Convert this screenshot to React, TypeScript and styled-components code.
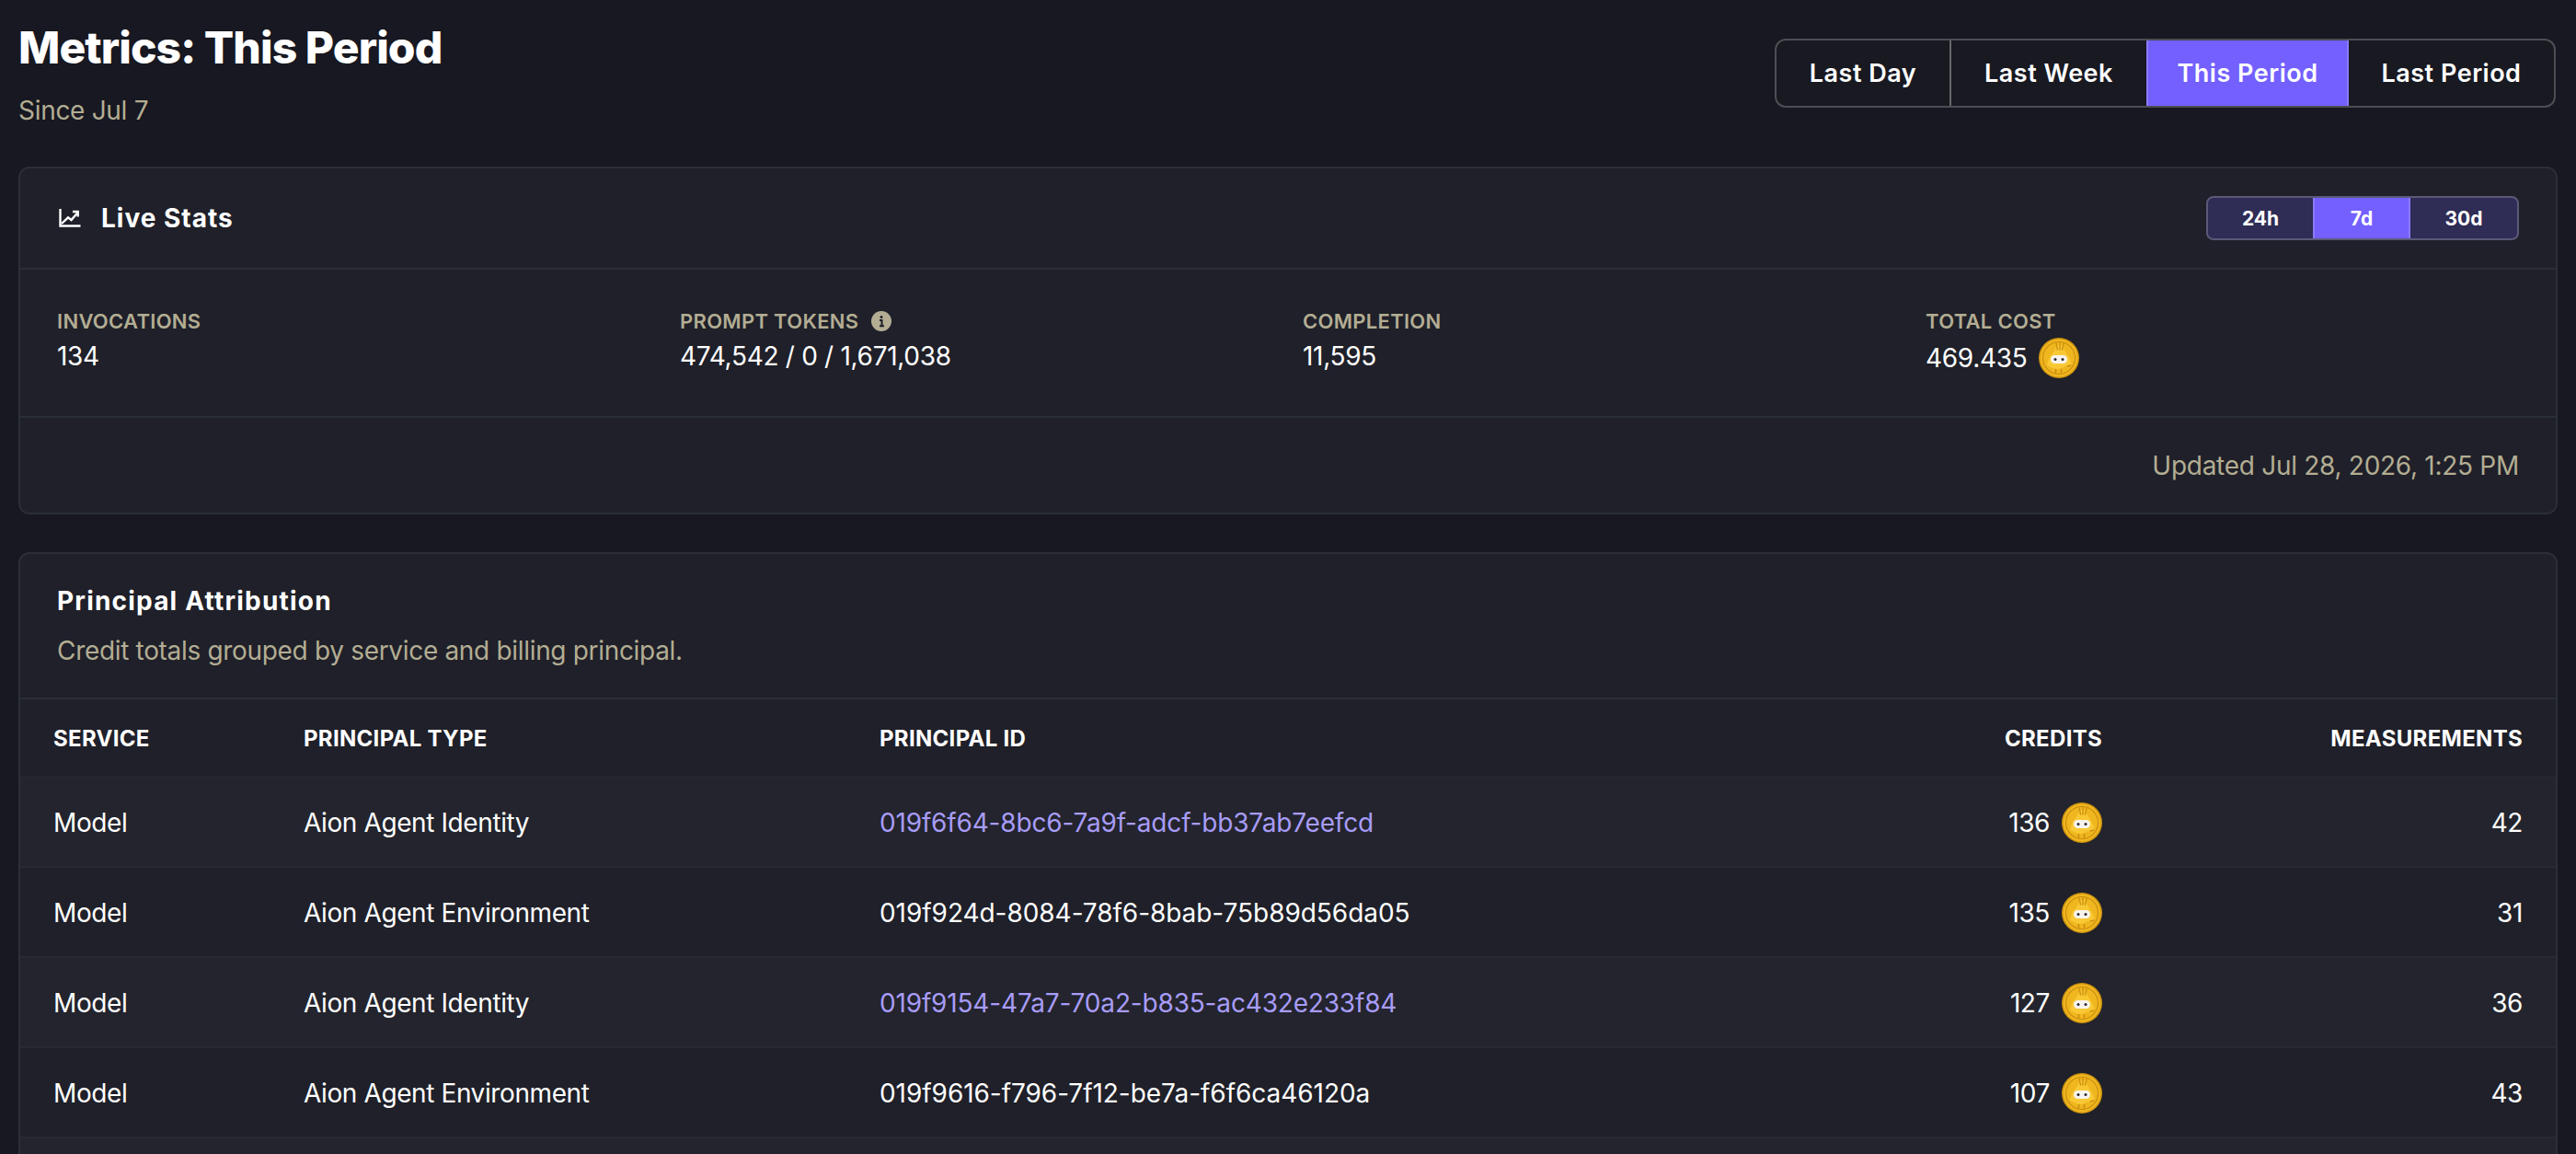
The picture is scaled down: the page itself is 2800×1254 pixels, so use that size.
import React from "react";
import styled, { createGlobalStyle } from "styled-components";

const Global = createGlobalStyle`
  * { box-sizing: border-box; }
  html, body { margin: 0; height: 1254px; overflow: hidden; background: #171821; }
  body { font-family: Inter, "Liberation Sans", sans-serif; color: #fff; }
`;

const MUTED = "#b3ad93";

const Page = styled.div`
  width: 2800px;
  height: 1254px;
  overflow: hidden;
  padding: 0 20px;
  background: #171821;
`;
const TopBar = styled.header`
  display: flex;
  justify-content: space-between;
  align-items: flex-start;
  height: 181px;
  padding-top: 22px;
`;
const Title = styled.h1`
  margin: 0;
  font-size: 48px;
  line-height: 60px;
  font-weight: 800;
  letter-spacing: -0.9px;
`;
const Since = styled.p`
  margin: 18px 0 0;
  font-size: 28px;
  line-height: 40px;
  letter-spacing: -0.3px;
  color: ${MUTED};
`;
const Segments = styled.div`
  display: flex;
  margin: 20px 2px 0 0;
  height: 75px;
  border: 2px solid #4d4d54;
  border-radius: 12px;
  overflow: hidden;
  background: #181921;
`;
const Segment = styled.button<{ $w: number; $active?: boolean; $divider?: boolean }>`
  width: ${(p) => p.$w}px;
  margin: ${(p) => (p.$active ? "-2px 0" : "0")};
  border: ${(p) => (p.$active ? "2px solid #8a7bff" : "none")};
  border-right: ${(p) => (p.$active ? "2px solid #8a7bff" : p.$divider ? "2px solid #68686e" : "none")};
  background: ${(p) => (p.$active ? "#7360ff" : "transparent")};
  color: #fff;
  font-family: Inter, sans-serif;
  font-size: 27px;
  font-weight: 600;
  letter-spacing: 0.5px;
  padding: 0;
`;
const Card = styled.section`
  background: #1f2029;
  border: 2px solid #2a2e37;
  border-radius: 12px;
  overflow: hidden;
`;
const LiveCard = styled(Card)`
  height: 378px;
`;
const TableCard = styled(Card)`
  margin-top: 41px;
  height: 700px;
`;
const CardHead = styled.div`
  display: flex;
  justify-content: space-between;
  align-items: center;
  height: 110px;
  padding: 0 40px 0 42px;
  border-bottom: 2px solid #2a2e37;
`;
const HeadTitle = styled.h2`
  display: flex;
  align-items: center;
  gap: 22px;
  margin: 0;
  font-size: 28px;
  line-height: 40px;
  font-weight: 700;
  letter-spacing: 1px;
`;
const Ranges = styled.div`
  display: flex;
  height: 48px;
  border: 2px solid #5b5978;
  border-radius: 8px;
  overflow: hidden;
  background: #2f2c55;
`;
const Range = styled.button<{ $w: number; $active?: boolean }>`
  width: ${(p) => p.$w}px;
  margin: ${(p) => (p.$active ? "-2px 0" : "0")};
  border: ${(p) => (p.$active ? "2px solid #8a7bff" : "none")};
  background: ${(p) => (p.$active ? "#7360ff" : "transparent")};
  color: #fff;
  font-family: Inter, sans-serif;
  font-size: 21px;
  font-weight: 700;
  padding: 0;
`;
const Stats = styled.div`
  display: grid;
  grid-template-columns: repeat(4, 1fr);
  column-gap: 32px;
  height: 161px;
  padding: 40px 40px 0 40px;
  border-bottom: 2px solid #2a2e37;
`;
const Label = styled.div`
  display: flex;
  align-items: center;
  gap: 14px;
  height: 32px;
  font-size: 22px;
  font-weight: 600;
  letter-spacing: 0.3px;
  color: ${MUTED};
`;
const Value = styled.div`
  display: flex;
  align-items: center;
  gap: 13px;
  margin-top: 2px;
  min-height: 40px;
  font-size: 28px;
  line-height: 40px;
  letter-spacing: -0.3px;
`;
const Updated = styled.div`
  display: flex;
  justify-content: flex-end;
  align-items: center;
  height: 101px;
  padding: 2px 40px 0;
  font-size: 28px;
  letter-spacing: -0.28px;
  color: ${MUTED};
`;
const TableHead = styled.div`
  height: 158px;
  padding: 31px 40px 0;
  border-bottom: 2px solid #2a2e37;
`;
const TableTitle = styled.h2`
  margin: 0;
  font-size: 28px;
  line-height: 40px;
  font-weight: 700;
  letter-spacing: 1.2px;
`;
const TableSub = styled.p`
  margin: 14px 0 0;
  font-size: 28px;
  line-height: 40px;
  letter-spacing: -0.32px;
  color: ${MUTED};
`;
const Table = styled.table`
  width: 2756px;
  table-layout: fixed;
  border-collapse: separate;
  border-spacing: 0;
`;
const Th = styled.th<{ $right?: boolean }>`
  height: 85px;
  padding: 1px 36px 0;
  border-bottom: 2px solid #25262f;
  text-align: ${(p) => (p.$right ? "right" : "left")};
  font-size: 24px;
  font-weight: 700;
  letter-spacing: 0.3px;
  color: #fff;
`;
const Row = styled.tr<{ $odd: boolean }>`
  background: ${(p) => (p.$odd ? "#23242d" : "#1f2029")};
`;
const Td = styled.td<{ $right?: boolean }>`
  height: 98px;
  padding: 2px 36px 0;
  border-bottom: 2px solid #282932;
  text-align: ${(p) => (p.$right ? "right" : "left")};
  font-size: 28px;
  letter-spacing: -0.4px;
  color: #fff;
`;
const Uuid = styled.span`
  letter-spacing: -0.05px;
`;
const Link = styled.a`
  color: #a89cf7;
  letter-spacing: -0.17px;
  text-decoration: none;
`;
const Credits = styled.div`
  display: flex;
  justify-content: flex-end;
  align-items: center;
  gap: 13px;
`;

const Coin = () => (
  <svg width="44" height="44" viewBox="0 0 44 44" aria-hidden="true">
    <circle cx="22" cy="22" r="22" fill="#cf9410" />
    <circle cx="22" cy="22" r="20.500" fill="#efb61f" />
    <circle cx="22" cy="22" r="17.500" fill="none" stroke="#c98c0e" strokeWidth="1.100" />
    <path d="M9 30c1-5 3-10 6-13 2-2 3-6 5-9h6c1 3 2 6 4 9 3 4 5 9 6 13l-5 2-3-1c-2 2-5 3-8 3s-6-1-8-3z" fill="#f9c935" />
    <path d="M19 6l1.500 7M23 5v8M27 6l-1.500 7" stroke="#cf9410" strokeWidth="1.500" fill="none" strokeLinecap="round" />
    <path d="M31 31l4-1" stroke="#c98c0e" strokeWidth="1.400" strokeLinecap="round" />
    <rect x="13" y="19" width="18" height="9" rx="4.500" fill="#f7f4ee" />
    <circle cx="18" cy="23.500" r="1.500" fill="#2b2a33" />
    <circle cx="26" cy="23.500" r="1.500" fill="#2b2a33" />
    <path d="M18.500 34.500v3.500M24.500 34.500v3.500" stroke="#c98c0e" strokeWidth="1.600" strokeLinecap="round" />
  </svg>
);
const Info = () => (
  <svg width="22" height="22" viewBox="0 0 22 22" aria-hidden="true">
    <circle cx="11" cy="11" r="11" fill={MUTED} />
    <circle cx="11" cy="6.500" r="1.500" fill="#1f2029" />
    <path d="M9 10h2.500v6M9 16.300h5" stroke="#1f2029" strokeWidth="2" fill="none" />
  </svg>
);
const ChartIcon = () => (
  <svg width="24" height="20" viewBox="0 0 24 20" fill="none" stroke="#fff" strokeWidth="2.400" aria-hidden="true">
    <path d="M1.500 0v18.500h22" />
    <path d="M3 16l7-6.700 3.500 2.700 7-8" />
    <path d="M15 3h5.700v5.500" />
  </svg>
);

const rows = [
  ["Aion Agent Identity", "019f6f64-8bc6-7a9f-adcf-bb37ab7eefcd", "136", "42", true],
  ["Aion Agent Environment", "019f924d-8084-78f6-8bab-75b89d56da05", "135", "31", false],
  ["Aion Agent Identity", "019f9154-47a7-70a2-b835-ac432e233f84", "127", "36", true],
  ["Aion Agent Environment", "019f9616-f796-7f12-be7a-f6f6ca46120a", "107", "43", false],
] as const;

export default function App() {
  return (
    <Page>
      <Global />
      <TopBar>
        <div>
          <Title>Metrics: This Period</Title>
          <Since>Since Jul 7</Since>
        </div>
        <Segments>
          <Segment $w={190} $divider>Last Day</Segment>
          <Segment $w={212}>Last Week</Segment>
          <Segment $w={220} $active>This Period</Segment>
          <Segment $w={223}>Last Period</Segment>
        </Segments>
      </TopBar>
      <LiveCard>
        <CardHead>
          <HeadTitle><ChartIcon />Live Stats</HeadTitle>
          <Ranges>
            <Range $w={114}>24h</Range>
            <Range $w={106} $active>7d</Range>
            <Range $w={116}>30d</Range>
          </Ranges>
        </CardHead>
        <Stats>
          <div><Label>INVOCATIONS</Label><Value>134</Value></div>
          <div><Label>PROMPT TOKENS <Info /></Label><Value>474,542 / 0 / 1,671,038</Value></div>
          <div><Label>COMPLETION</Label><Value>11,595</Value></div>
          <div><Label>TOTAL COST</Label><Value>469.435 <Coin /></Value></div>
        </Stats>
        <Updated>Updated Jul 28, 2026, 1:25 PM</Updated>
      </LiveCard>
      <TableCard>
        <TableHead>
          <TableTitle>Principal Attribution</TableTitle>
          <TableSub>Credit totals grouped by service and billing principal.</TableSub>
        </TableHead>
        <Table>
          <colgroup>
            <col width="272" />
            <col width="626" />
            <col width="900" />
            <col width="501" />
            <col width="457" />
          </colgroup>
          <thead>
            <tr>
              <Th>SERVICE</Th>
              <Th>PRINCIPAL TYPE</Th>
              <Th>PRINCIPAL ID</Th>
              <Th $right>CREDITS</Th>
              <Th $right>MEASUREMENTS</Th>
            </tr>
          </thead>
          <tbody>
            {rows.map(([type, id, credits, measurements, linked], i) => (
              <Row key={id} $odd={i % 2 === 0}>
                <Td>Model</Td>
                <Td>{type}</Td>
                <Td>{linked ? <Link href="#">{id}</Link> : <Uuid>{id}</Uuid>}</Td>
                <Td $right><Credits>{credits} <Coin /></Credits></Td>
                <Td $right>{measurements}</Td>
              </Row>
            ))}
            <Row $odd>
              <Td colSpan={5} />
            </Row>
          </tbody>
        </Table>
      </TableCard>
    </Page>
  );
}
